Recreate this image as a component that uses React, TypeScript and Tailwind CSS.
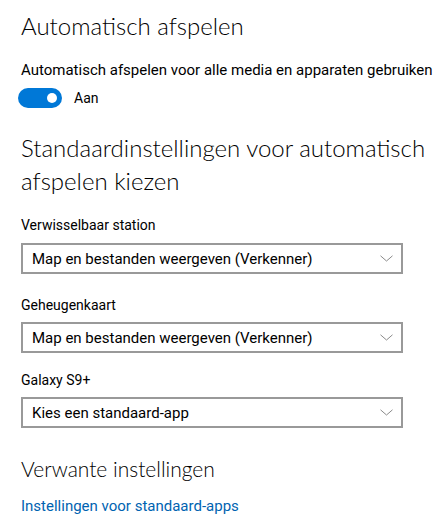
const body = { fontFamily: 'Roboto, "Noto Sans", sans-serif' };
const head = { fontFamily: 'Lato, "Noto Sans", sans-serif' };

const Chevron = () => (
  <svg width="13" height="7" viewBox="0 0 13 7" fill="none" className="shrink-0">
    <polyline points="0.5,0.8 6.5,6 12.5,0.8" stroke="#8a8a8a" strokeWidth="1" />
  </svg>
);

const Dropdown = ({ value, className }: { value: string; className: string }) => (
  <div
    className={`flex h-[31px] w-[382px] items-center justify-between border-2 border-[#999999] bg-white pl-[9px] pr-[8px] ${className}`}
  >
    <span className="text-[15px] leading-[20px] text-black">{value}</span>
    <Chevron />
  </div>
);

export default function App() {
  return (
    <div className="min-h-screen bg-white pl-[21px] pt-[10px] text-black" style={body}>
      <h1 className="text-[24px] leading-[32px] font-light" style={head}>
        Automatisch afspelen
      </h1>
      <p className="mt-[18px] text-[15px] leading-[20px] whitespace-nowrap">
        Automatisch afspelen voor alle media en apparaten gebruiken
      </p>
      <div className="mt-[8px] -ml-[3px] flex items-center gap-[12px]">
        <div className="flex h-[20px] w-[44px] items-center justify-end rounded-full bg-[#0078d7] pr-[5px]">
          <span className="h-[10px] w-[10px] rounded-full bg-white" />
        </div>
        <span className="text-[14px] leading-[20px]">Aan</span>
      </div>

      <h2 className="mt-[23px] w-[410px] text-[24px] leading-[33px] font-light" style={head}>
        Standaardinstellingen voor automatisch afspelen kiezen
      </h2>

      <p className="mt-[18px] text-[14px] leading-[20px]">Verwisselbaar station</p>
      <Dropdown className="mt-[8px]" value="Map en bestanden weergeven (Verkenner)" />

      <p className="mt-[21px] text-[14px] leading-[20px]">Geheugenkaart</p>
      <Dropdown className="mt-[7px]" value="Map en bestanden weergeven (Verkenner)" />

      <p className="mt-[17px] text-[14px] leading-[20px]">Galaxy S9+</p>
      <Dropdown className="mt-[7px]" value="Kies een standaard-app" />

      <h2 className="mt-[27px] text-[21px] leading-[28px] font-light" style={head}>
        Verwante instellingen
      </h2>
      <a className="mt-[13px] block text-[15px] leading-[20px] text-[#0063b1]" href="#">
        Instellingen voor standaard-apps
      </a>
    </div>
  );
}
